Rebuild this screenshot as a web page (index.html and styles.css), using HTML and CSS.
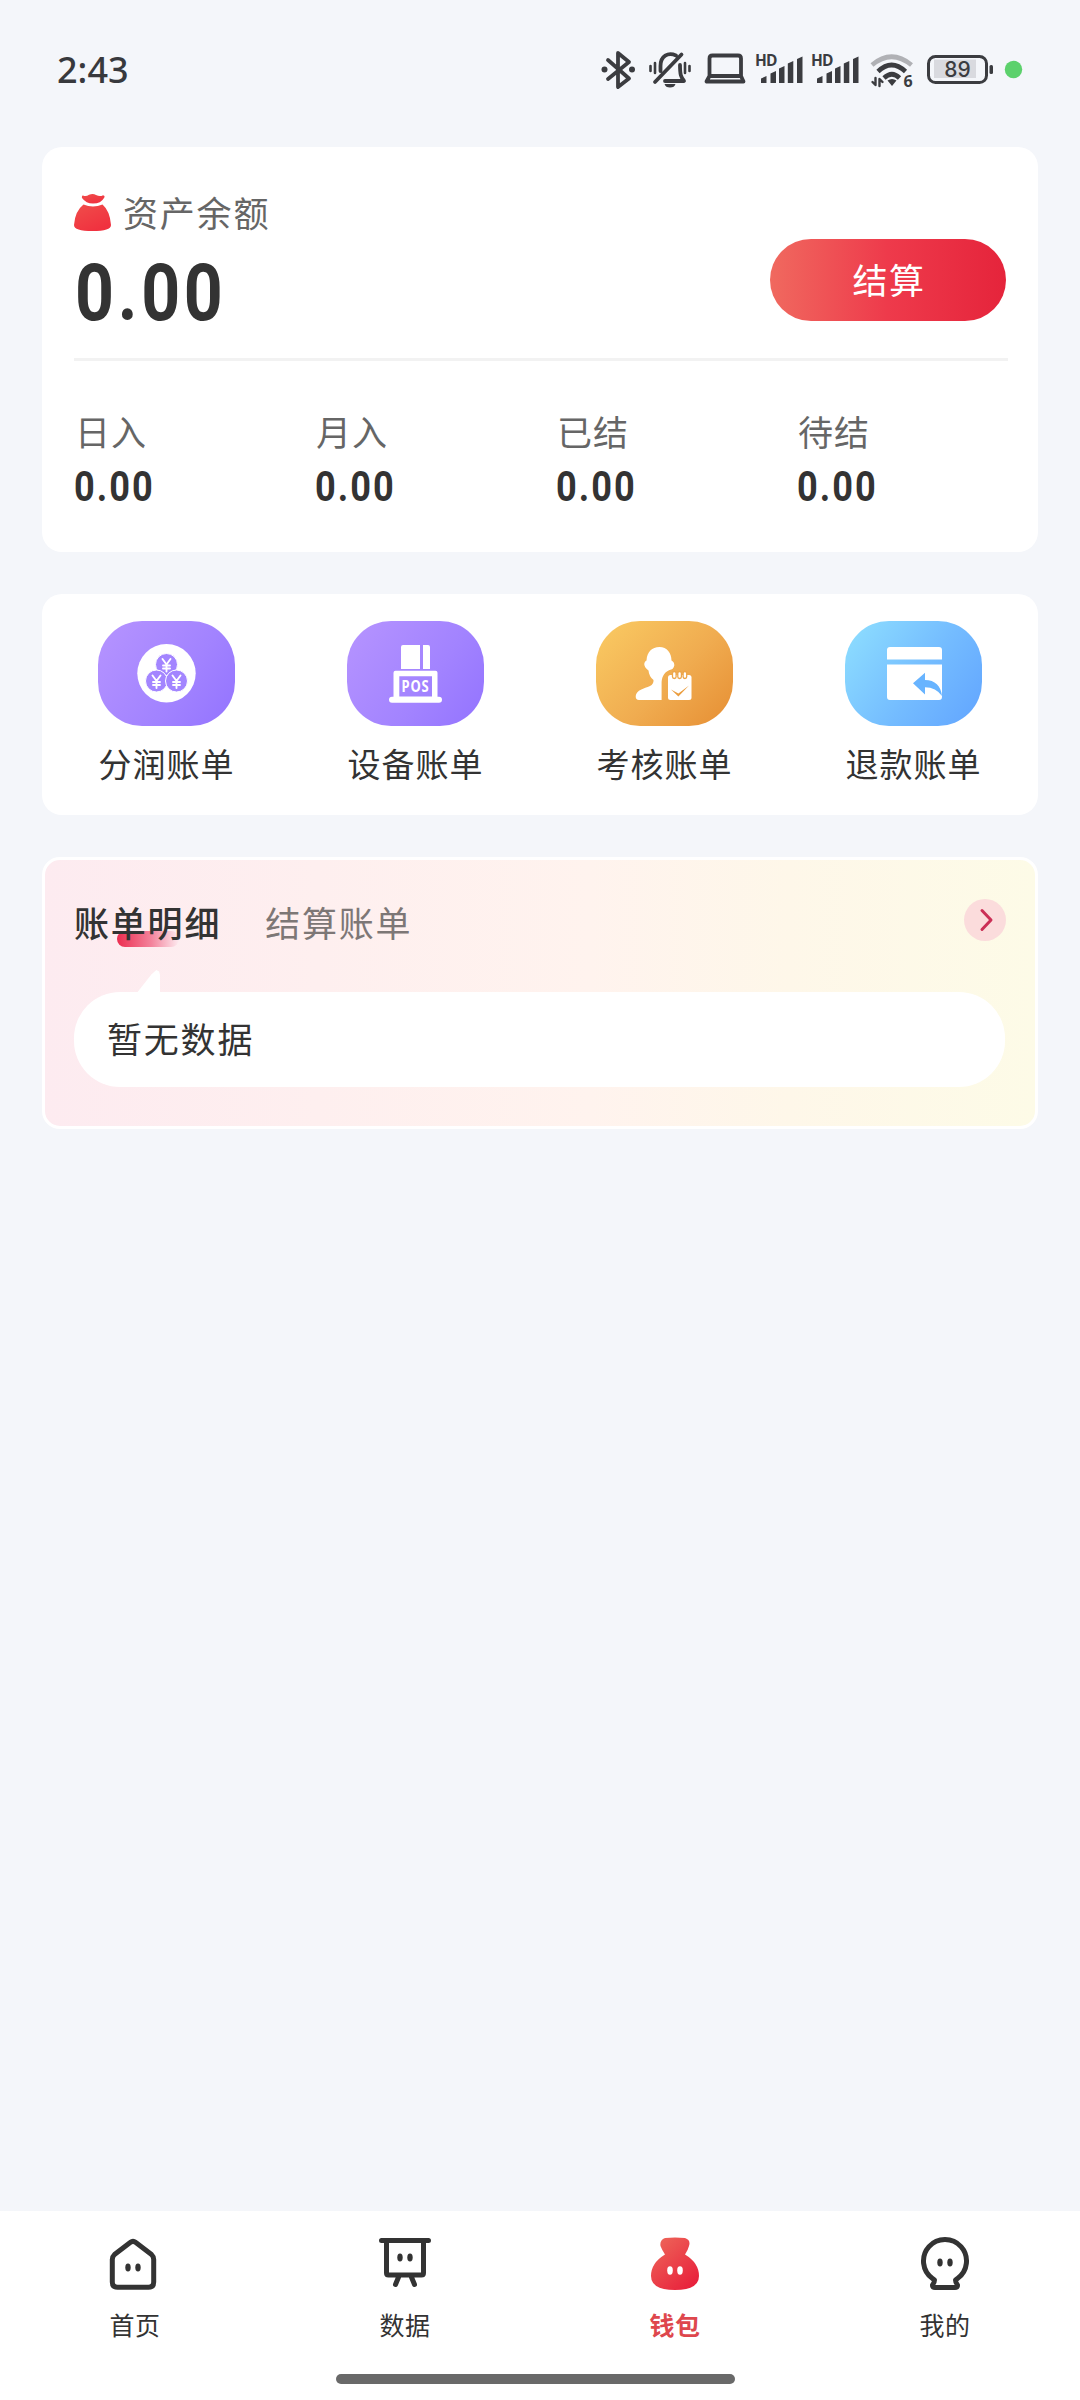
FILE: index.html
```html
<!DOCTYPE html>
<html lang="zh-CN">
<head>
<meta charset="utf-8">
<title>钱包</title>
<link rel="stylesheet" href="styles.css">
</head>
<body>
<div class="screen">
  <header class="status">
    <span class="clock">2:43</span>
    <div class="status-icons">
      <svg width="46" height="60" viewBox="596 40 46 60"><path class="ln" d="M608 60L629 78.500L618 87V53L629 62L608 79"/><circle cx="604.500" cy="69.500" r="3"/><circle cx="632" cy="69.500" r="3"/></svg>
      <svg width="56" height="60" viewBox="642 40 56 60"><path class="ln" d="M681.500 54.500L655 82M660.500 71V66C660.500 56 668 52 676 55.500M680 65C680 75 681 77 684 81H665"/><path d="M664.500 84h11q-1 3.500-5.500 3.500t-5.500-3.500z"/><path class="ln thin" d="M650.500 66v5M655 63v10M685 63v10M689.500 66v5"/></svg>
      <svg width="52" height="60" viewBox="698 40 52 60"><path class="ln" d="M709.500 76V58.500q0-3 3-3h25.500q3 0 3 3V76zM709.500 76L706.500 81.500H743.500L741 76"/></svg>
      <svg width="58" height="60" viewBox="750 40 58 60"><text class="hd" x="755" y="66" textLength="22.500">HD</text><path d="M761 83V78.500l5.500-2.500v7zM770.500 83V73.500l5.500-2.500V83zM779 83V68.500l5.500-2.500V83zM787.800 83V63.500l5.500-2.500V83zM797 83V59l5.500-2.500V83z"/></svg>
      <svg width="56" height="60" viewBox="752 40 56 60"><text class="hd" x="755" y="66" textLength="22.500">HD</text><path d="M761 83V78.500l5.500-2.500v7zM770.500 83V73.500l5.500-2.500V83zM779 83V68.500l5.500-2.500V83zM787.800 83V63.500l5.500-2.500V83zM797 83V59l5.500-2.500V83z"/></svg>
      <svg width="56" height="60" viewBox="864 40 56 60"><path class="ln wifi faint" d="M872 65Q891.500 48.500 911.500 65"/><path class="ln wifi" d="M878 71.500Q891.500 58.500 905.500 71.500M884 78Q892 70.500 899.500 78"/><path d="M887.500 80.500q4.500-3 9 0L892 86z"/><path class="ln arrows" d="M875.500 78v7l-3-3M879.500 86v-7l3 3"/><text class="gen" x="903.500" y="86.500">6</text></svg>
      <svg width="80" height="60" viewBox="920 40 80 60"><rect x="934" y="59.500" width="42" height="18.500" fill="#d9dadf"/><rect class="ln body" x="928.500" y="56.500" width="58" height="26" rx="7"/><rect x="989.500" y="65" width="3.500" height="9" rx="1.500"/><text class="level" x="957.500" y="77">89</text></svg>
      <svg width="28" height="60" viewBox="1000 40 28 60"><circle cx="1013.500" cy="69.500" r="8.700" fill="#5cd16c"/></svg>
    </div>
  </header>

  <main class="content">
    <section class="card balance">
      <div class="balance-top">
        <div class="total">
          <div class="total-label">
            <svg class="bag" width="37" height="38" viewBox="0 0 37 38"><defs><linearGradient id="red" x1="0" y1="0" x2="0.800" y2="1"><stop offset="0" stop-color="#ee6a5b"/><stop offset="1" stop-color="#e8203b"/></linearGradient><linearGradient id="bag" x1="0" y1="0" x2="0.600" y2="1"><stop offset="0" stop-color="#f04d4a"/><stop offset="1" stop-color="#f0313f"/></linearGradient></defs><g fill="url(#bag)"><path d="M9 1.500Q12 3 15 .8Q19-.8 22 1Q26 3 29 1.200Q31.500 1.500 30 4Q27 9.500 19 9.500Q12 9.500 8 4Q7.500 1.500 9 1.500z"/><path d="M9.500 10.500Q19 14.500 28.500 10.500Q36 17 37 31Q37 37 18.500 37Q0 37 0 31Q1 17 9.500 10.500z"/></g></svg>
            <span>资产余额</span>
          </div>
          <div class="total-value"><span class="num">0.00</span></div>
        </div>
        <button class="settle">结算</button>
      </div>
      <div class="stats">
        <div class="stat"><span class="stat-label">日入</span><span class="stat-value num">0.00</span></div>
        <div class="stat"><span class="stat-label">月入</span><span class="stat-value num">0.00</span></div>
        <div class="stat"><span class="stat-label">已结</span><span class="stat-value num">0.00</span></div>
        <div class="stat"><span class="stat-label">待结</span><span class="stat-value num">0.00</span></div>
      </div>
    </section>

    <section class="card services">
      <a class="service"><span class="tile purple"><svg width="137" height="105" viewBox="0 0 137 105"><circle cx="68.500" cy="52.300" r="29.200" fill="#fff"/><g class="coins"><circle cx="68.500" cy="43.500" r="11"/><circle cx="58.500" cy="60" r="11"/><circle cx="78.500" cy="60" r="11"/></g><path class="yen" d="M64.500 38l4 5.500 4-5.500M68.500 43.500v7M65 44.500h7M65 47.500h7M54.500 54.500l4 5.500 4-5.500M58.500 60v7M55 61h7M55 64h7M74.500 54.500l4 5.500 4-5.500M78.500 60v7M75 61h7M75 64h7"/></svg></span><span>分润账单</span></a>
      <a class="service"><span class="tile purple"><svg width="137" height="105" viewBox="0 0 137 105"><g fill="#fff"><path d="M56 24H73V48H54V26q0-2 2-2zM76 24h5q2 0 2 2V48H76z"/><path fill-rule="evenodd" d="M48.500 49.700h40q2 0 2 2V75.700H92q3 0 3 3t-3 3H45q-3 0-3-3t3-3h1.500V51.700q0-2 2-2zM52.300 55.300V75.500H85V55.300z"/></g><text class="pos" x="54.500" y="71.300" textLength="28" lengthAdjust="spacingAndGlyphs">POS</text></svg></span><span>设备账单</span></a>
      <a class="service"><span class="tile orange"><svg width="137" height="105" viewBox="0 0 137 105"><path fill="#fff" d="M63.500 26C71 26 75.500 32 75.500 39.500Q78.500 41 78.300 44.500Q77.500 48.500 73.500 49C67 52 65.600 57 65.600 63V79H43Q39.500 79 39.700 75C40.500 69 48 67.500 54 65Q57.800 63 57.500 59Q53 55.500 52.500 49.500Q48.500 46.500 48.200 43Q48.500 40 50.500 39.500C51 31 56 26 63.500 26z"/><rect x="72" y="54" width="23.500" height="25" rx="2.500" fill="#fff"/><g fill="#fff" stroke="#eda548" stroke-width="1.300"><rect x="76.500" y="50.500" width="3.600" height="7" rx="1.800"/><rect x="81.800" y="50.500" width="3.600" height="7" rx="1.800"/><rect x="87.100" y="50.500" width="3.600" height="7" rx="1.800"/></g><path d="M75 68.500L82.400 72.500L93 64.500L82.400 75.500z" fill="#eb9e40"/></svg></span><span>考核账单</span></a>
      <a class="service"><span class="tile blue"><svg width="137" height="105" viewBox="0 0 137 105"><path fill="#fff" d="M45 26H94q3 0 3 3V38.500H42V29q0-3 3-3zM42 43.500H97V76q0 3-3 3H45q-3 0-3-3z"/><path fill="#68b4ff" d="M68 62.300L80 51.700V59C90 59 96 65 97 75Q91 66.500 80 66.300V73.500z"/></svg></span><span>退款账单</span></a>
    </section>

    <section class="card bills">
      <div class="tabs">
        <span class="tab active">账单明细</span>
        <span class="tab">结算账单</span>
        <svg class="more" width="42" height="42" viewBox="0 0 42 42"><circle cx="21" cy="21" r="21" fill="#fbdcdc"/><path d="M18 11.500l9 9.500-9 9.500" fill="none" stroke="#cb2f56" stroke-width="3" stroke-linecap="round" stroke-linejoin="round"/></svg>
      </div>
      <div class="bubble">暂无数据</div>
    </section>
  </main>

  <nav class="tabbar">
    <div class="tabbar-items">
      <a class="nav"><svg class="home" width="54" height="56" viewBox="0 0 54 56"><path class="nl" d="M24.500 6.300Q27 4.300 29.500 6.300L45.500 18.500Q47.700 20.500 47.700 23.500V46Q47.700 51.300 42.500 51.300H11.500Q6.300 51.300 6.300 46V23.500Q6.300 20.500 8.500 18.500z"/><ellipse cx="22" cy="31.500" rx="2.700" ry="4"/><ellipse cx="32" cy="31.500" rx="2.700" ry="4"/></svg><span>首页</span></a>
      <a class="nav"><svg width="54" height="56" viewBox="0 0 54 56"><path class="nl" d="M3.500 4.500H50.500M8.500 5V37Q8.500 39 10.500 39H43.500Q45.500 39 45.500 37V5M21 40L17.500 48.500M33 40L36.500 48.500"/><ellipse cx="22" cy="21.500" rx="2.700" ry="4"/><ellipse cx="32" cy="21.500" rx="2.700" ry="4"/></svg><span>数据</span></a>
      <a class="nav current"><svg width="54" height="56" viewBox="0 0 54 56"><path fill="url(#red)" d="M17 2Q27 1 37 2Q43 4 41 10Q40 14 37 18.500Q51 27 51 40Q51 54 27 54Q3 54 3 40Q3 27 17 18.500Q14 14 12.500 10Q11.500 4 17 2z"/><ellipse cx="22" cy="34.500" rx="2.800" ry="4.200" fill="#fff"/><ellipse cx="32" cy="34.500" rx="2.800" ry="4.200" fill="#fff"/></svg><span>钱包</span></a>
      <a class="nav"><svg width="54" height="56" viewBox="0 0 54 56"><path class="nl" d="M16.500 44L14.500 42.500A21.500 21.500 0 1 1 39.500 42.500L37.500 44Q37.500 46.500 39.500 49Q39.500 51.500 37 51.500H17Q14.500 51.500 14.500 49Q16.500 46.500 16.500 44z"/><ellipse cx="22" cy="26.500" rx="2.700" ry="4"/><ellipse cx="32" cy="26.500" rx="2.700" ry="4"/></svg><span>我的</span></a>
    </div>
    <div class="handle"></div>
  </nav>
</div>
</body>
</html>
```
FILE: styles.css
```css
* { box-sizing: border-box; }

body {
  margin: 0;
  background: #f4f6fa;
  color: #333;
  font-family: "Noto Sans CJK SC", sans-serif;
}

.screen {
  width: 1080px;
  height: 2400px;
  display: flex;
  flex-direction: column;
}

svg { display: block; flex: none; }

/* Status bar */
.status {
  height: 147px;
  padding: 40px 52px 47px 57px;
  display: flex;
  justify-content: space-between;
  align-items: center;
}

.clock {
  font: 500 36px/60px "Noto Sans", sans-serif;
  color: #38393d;
}

.status-icons { display: flex; fill: #3b3c40; }

.ln {
  fill: none;
  stroke: #3b3c40;
  stroke-width: 3.8;
  stroke-linecap: round;
  stroke-linejoin: round;
}
.ln.thin { stroke-width: 2.6; }
.ln.wifi { stroke-width: 4.6; stroke-linecap: butt; }
.ln.faint { stroke: #b0b1b5; }
.ln.arrows { stroke-width: 2.4; }
.ln.body { stroke-width: 3; }

.hd { font: 700 15.5px "Open Sans", sans-serif; }
.gen { font: 700 16px "Open Sans", sans-serif; }
.level { font: 500 21px Inter, sans-serif; text-anchor: middle; }

/* Cards */
.content {
  flex: 1;
  padding: 0 42px;
  display: flex;
  flex-direction: column;
  gap: 42px;
}

.card { background: #fff; border-radius: 20px; }

.num {
  display: block;
  font-family: Roboto, sans-serif;
  font-weight: 700;
  letter-spacing: 0.055em;
  transform: scaleX(0.86);
  transform-origin: left;
}

.balance { height: 405px; padding: 44px 30px 0 32px; }

.balance-top {
  height: 170px;
  padding-right: 2px;
  border-bottom: 3px solid #f2f2f2;
  display: flex;
  justify-content: space-between;
  align-items: flex-start;
}

.total-label {
  height: 44px;
  display: flex;
  align-items: center;
  gap: 12px;
  color: #666;
  font-size: 35px;
  line-height: 42px;
  letter-spacing: 1.8px;
}
.total-label span { margin-top: -3px; }

.total-value { font-size: 79px; line-height: 92px; margin: 12px 0 0 1px; color: #333; }

.settle {
  width: 236px;
  height: 82px;
  margin-top: 48px;
  padding: 0 0 3px 2px;
  border: 0;
  border-radius: 41px;
  background: linear-gradient(90deg, #f0695f, #ee3a4b 50%, #e5243b);
  color: #fff;
  font: 400 35px/79px "Noto Sans CJK SC", sans-serif;
  letter-spacing: 1.5px;
}

.stats {
  display: grid;
  grid-template-columns: repeat(4, 241px);
  padding-top: 47px;
}

.stat-label {
  display: block;
  color: #666;
  font-size: 35px;
  line-height: 46px;
  letter-spacing: 1px;
  padding-left: 1px;
}

.stat-value { font-size: 42px; line-height: 50px; margin-top: 8px; }

/* Shortcuts */
.services {
  height: 221px;
  padding-top: 27px;
  display: grid;
  grid-template-columns: repeat(4, 1fr);
}

.service {
  display: flex;
  flex-direction: column;
  align-items: center;
  gap: 13px;
  font-size: 33px;
  line-height: 48px;
  letter-spacing: 1px;
}

.tile { width: 137px; height: 105px; border-radius: 44px; overflow: hidden; }
.purple { background: linear-gradient(125deg, #b694ff, #a283ff 60%, #9373ff); }
.orange { background: linear-gradient(135deg, #facb63, #f0ac50 55%, #e68e33); }
.blue { background: linear-gradient(125deg, #8fe0ff, #74bcff 55%, #61a4ff); }

.coins { fill: #a385ff; stroke: #fff; stroke-width: 1; }
.yen { fill: none; stroke: #fff; stroke-width: 1.9; stroke-linecap: round; }
.pos { font: 700 16px "Noto Sans", sans-serif; fill: #fff; }

/* Bills */
.bills {
  height: 272px;
  padding: 36px 30px 0 29px;
  border: 3px solid #fff;
  border-radius: 18px;
  background: linear-gradient(90deg, #fdebf0, #fff3ee 55%, #fef7e9 75%, #fdfbe7);
}

.tabs {
  height: 96px;
  display: flex;
  align-items: flex-start;
  gap: 44px;
  font-size: 35px;
  line-height: 52px;
  letter-spacing: 1.8px;
}

.tab { color: #7d7776; }
.tab.active {
  position: relative;
  z-index: 0;
  color: #333;
  font-weight: 500;
}
.tab.active::after {
  content: "";
  position: absolute;
  z-index: -1;
  left: 43px;
  top: 35px;
  width: 62px;
  height: 16px;
  border-radius: 8px;
  background: linear-gradient(90deg, #ec2d50, #f3829b 55%, #fdebf0);
}

.more { margin-left: auto; margin-right: -1px; margin-top: 3px; }

.bubble {
  position: relative;
  height: 95px;
  padding-left: 33px;
  border-radius: 46px;
  background: #fff;
  font-size: 35px;
  line-height: 92px;
  letter-spacing: 1.8px;
}
.bubble::before {
  content: "";
  position: absolute;
  left: 62px;
  top: -22px;
  width: 24px;
  height: 24px;
  background: #fff;
  clip-path: polygon(0 100%, 65% 18%, 85% 0, 96% 6%, 100% 20%, 100% 100%);
}

/* Bottom navigation */
.tabbar { height: 189px; padding-top: 25px; background: #fff; }
.tabbar-items { display: grid; grid-template-columns: repeat(4, 1fr); height: 138px; }

.nav {
  display: flex;
  flex-direction: column;
  align-items: center;
  gap: 13px;
  font-size: 25px;
  line-height: 38px;
  letter-spacing: 0.5px;
  fill: #333;
}
.nl { fill: none; stroke: #333; stroke-width: 5; stroke-linecap: round; stroke-linejoin: round; }
.home { margin-left: -5px; }
.current { color: #de474d; font-weight: 700; }

.handle { width: 399px; height: 10px; margin: 0 0 0 336px; border-radius: 5px; background: #696969; }
```
